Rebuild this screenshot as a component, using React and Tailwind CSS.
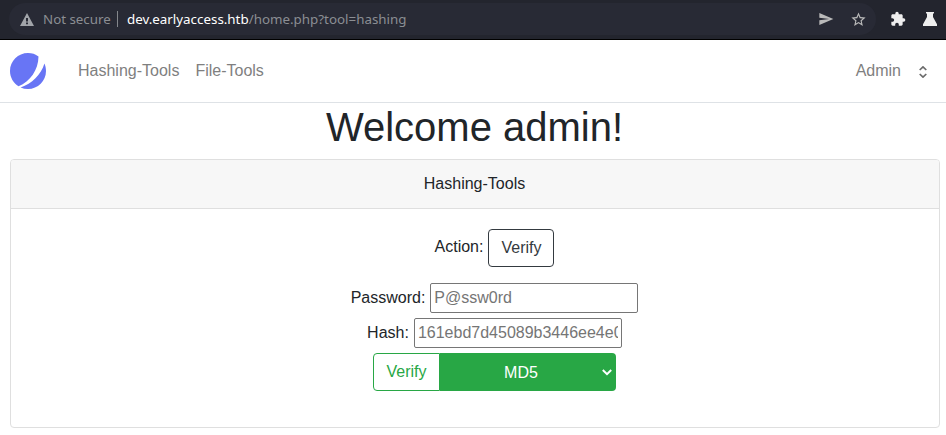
import { MdExtension, MdSend, MdStarBorder } from "react-icons/md";

function AddressBar() {
  return (
    <div className="flex h-10 items-start border-b border-black bg-[#23252e] pt-[3px] pl-[9px] font-['Noto_Sans',sans-serif]">
      <div className="flex h-8 w-[867px] shrink-0 items-center rounded-full bg-[#282a35] pr-[9px] pl-[11px]">
        <svg className="h-[13px] w-[14px] shrink-0" viewBox="0 0 14 13" fill="#a1a4a9">
          <path fillRule="evenodd" d="M7 0 14 13H0ZM6 5V8.5H8V5ZM6 9.5V11.2H8V9.5Z" />
        </svg>
        <span className="ml-[9px] w-[67px] whitespace-nowrap text-[13.33px] text-[#8b8e93]">Not secure</span>
        <span className="ml-[7px] h-4 w-px bg-[#84878c]" />
        <span className="ml-[9px] whitespace-nowrap text-[13.36px] text-[#8b8e93]">
          <span className="text-white">dev.earlyaccess.htb</span>/home.php?tool=hashing
        </span>
        <MdSend className="ml-auto size-4 text-[#bababa]" />
        <MdStarBorder className="ml-4 size-[17px] text-[#bababa]" />
      </div>
      <MdExtension className="mt-2 ml-[14px] size-4 shrink-0 text-[#eeeeee]" />
      <svg className="mt-[9px] ml-[17px] h-[14px] w-[14px] shrink-0" viewBox="0 0 14 14" fill="#eeeeee">
        <path d="M3 0H11V1.4H10V5L14 12.2V14H0V12.2L4 5V1.4H3Z" />
      </svg>
    </div>
  );
}

function Nav() {
  return (
    <nav className="flex h-[63px] items-center border-b border-[#dee2e6] pr-[19px] pl-[10px] text-[#7f7f7f]">
      <svg className="size-9" viewBox="0 0 48 48" fill="#6875F5">
        <path d="M11.395 44.428C4.557 40.198 0 32.632 0 24 0 10.745 10.745 0 24 0a23.891 23.891 0 0113.997 4.502c-.2 17.907-11.097 33.245-26.602 39.926z" />
        <path d="M14.134 45.885A23.914 23.914 0 0024 48c13.255 0 24-10.745 24-24 0-3.516-.756-6.856-2.115-9.866-4.659 15.143-16.608 27.092-31.75 31.751z" />
      </svg>
      <a className="ml-8">Hashing-Tools</a>
      <a className="ml-4">File-Tools</a>
      <a className="ml-auto">Admin</a>
      <svg className="mt-[2px] ml-[18px] h-3 w-2" viewBox="0 0 8 12" fill="none" stroke="#6b6b6b" strokeWidth="1.7">
        <path d="M.7 4 4 .9 7.3 4M.7 8 4 11.1 7.3 8" />
      </svg>
    </nav>
  );
}

function Field({ label, placeholder }) {
  return (
    <label className="flex items-center">
      <span className="mr-[5px] -ml-px">{label}</span>
      <input
        className="h-[30px] w-[208px] rounded-[2px] border-[1px] border-[#767676] bg-white pr-[3px] pl-[3px] placeholder:text-[#757575]"
        placeholder={placeholder}
      />
    </label>
  );
}

export default function App() {
  return (
    <div className="h-[435px] w-[946px] overflow-hidden bg-white font-['Liberation_Sans',Arial,sans-serif] text-base leading-6 text-[#212529]">
      <AddressBar />
      <Nav />
      <main className="pr-[6px] pl-[10px] text-center">
        <h1 className="mb-2 pr-[1px] text-[40px] leading-[48px]">Welcome admin!</h1>
        <section className="h-[269px] rounded border border-[#dfdfdf]">
          <h2 className="h-[49px] rounded-t-[3px] border-b border-[#dfdfdf] bg-[#f7f7f7] pt-3 pr-[1px]">Hashing-Tools</h2>
          <div className="flex flex-col items-center pt-5 pl-10">
            <div className="flex items-start">
              <span className="mt-[6px] mr-[5px] -ml-px">Action:</span>
              <button className="h-[38px] w-[66px] rounded border border-[#343a40] text-[#343a40]">Verify</button>
            </div>
            <div className="mt-4 flex flex-col items-center gap-[5px]">
              <Field label="Password:" placeholder="P@ssw0rd" />
              <Field label="Hash:" placeholder="161ebd7d45089b3446ee4e0d86dbcf92" />
              <div className="flex h-[38px] w-[243px]">
                <button className="w-[67px] rounded-l border border-[#28a745] pr-[1px] text-[#28a745]">Verify</button>
                <button className="flex flex-1 items-center rounded-r bg-[#28a745] pr-1 text-white">
                  <span className="flex-1 pt-[2px] pr-[1px]">MD5</span>
                  <svg className="h-[7px] w-[10px]" viewBox="0 0 10 7" fill="none" stroke="#fff" strokeWidth="2">
                    <path d="M.8 1 5 5.2 9.2 1" />
                  </svg>
                </button>
              </div>
            </div>
          </div>
        </section>
      </main>
    </div>
  );
}
